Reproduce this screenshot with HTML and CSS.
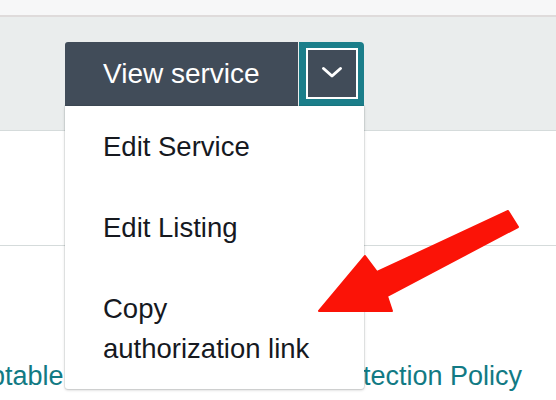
FILE: index.html
```html
<!DOCTYPE html>
<html lang="en">
<head>
<meta charset="utf-8">
<title>View service</title>
<link rel="stylesheet" href="styles.css">
</head>
<body>
<div class="page">
  <div class="topbar"></div>
  <div class="band">
    <div class="split">
      <button class="split-main" type="button">View service</button>
      <button class="split-toggle" type="button" aria-label="More actions">
        <span class="toggle-inner">
          <svg class="chevron" width="22" height="13" viewBox="0 0 22 13"><polyline points="2.5,2.5 11,10 19.5,2.5" fill="none" stroke="#ffffff" stroke-width="3" stroke-linecap="round" stroke-linejoin="round"/></svg>
        </span>
      </button>
      <ul class="menu">
        <li class="menu-item">Edit Service</li>
        <li class="menu-item">Edit Listing</li>
        <li class="menu-item">Copy authorization link</li>
      </ul>
    </div>
  </div>
  <div class="section"></div>
  <div class="footer">
    <a class="link link-left" href="#">Acceptable Use</a>
    <a class="link" href="#">Data Protection Policy</a>
  </div>
  <svg class="arrow" width="556" height="400" viewBox="0 0 556 400" aria-hidden="true">
    <polygon points="508,211 518,227 387,296 392,311 319,311 365,256 377,272" fill="#fb1307" stroke="#fb1307" stroke-width="2" stroke-linejoin="round"/>
  </svg>
</div>
</body>
</html>
```

FILE: styles.css
```css
* { box-sizing: border-box; }

html, body {
  margin: 0;
  padding: 0;
  background: #ffffff;
}

body {
  font-family: "Liberation Sans", Arial, Helvetica, sans-serif;
  color: #16191f;
}

.page {
  position: relative;
  width: 556px;
  height: 400px;
  overflow: hidden;
}

.topbar {
  height: 17px;
  background: #f7f7f8;
  border-bottom: 2px solid #dfdbdb;
}

.band {
  height: 114px;
  background: #eaeded;
  border-bottom: 1px solid #d5dbdb;
  padding: 25px 0 0 65px;
}

.split {
  position: relative;
  display: flex;
  width: 299px;
  height: 64px;
  z-index: 2;
}

.split-main {
  width: 233px;
  height: 64px;
  margin: 0;
  padding: 0 38px;
  border: 0;
  border-radius: 3px 0 0 0;
  background: #414c59;
  color: #ffffff;
  font-family: "Liberation Sans", Arial, Helvetica, sans-serif;
  font-size: 28px;
  line-height: 64px;
  text-align: left;
  white-space: nowrap;
}

.split-toggle {
  display: flex;
  width: 65px;
  height: 64px;
  margin: 0 0 0 1px;
  padding: 6px 6px 7px 7px;
  border: 0;
  border-radius: 0 4px 0 0;
  background: #1b7e8a;
}

.toggle-inner {
  flex: 1;
  display: flex;
  align-items: center;
  justify-content: center;
  border: 2px solid #ffffff;
  background: #414c59;
  padding-bottom: 2px;
}

.chevron { display: block; }

.menu {
  position: absolute;
  top: 100%;
  left: 0;
  width: 299px;
  margin: 0;
  padding: 0;
  list-style: none;
  background: #ffffff;
  border-radius: 0 0 3px 3px;
  box-shadow: 0 1px 3px rgba(0, 0, 0, 0.22), 0 0 0 1px rgba(0, 28, 36, 0.06);
}

.menu-item {
  padding: 20.5px 38px;
  font-size: 27.5px;
  line-height: 40px;
  color: #16191f;
}

.section {
  height: 115px;
  border-bottom: 1px solid #d5dbdb;
}

.footer {
  display: flex;
  justify-content: space-between;
  padding: 110px 34px 0 0;
  white-space: nowrap;
}

.link {
  color: #127a84;
  font-size: 27px;
  line-height: 40px;
  text-decoration: none;
}

.link-left {
  margin-left: -70px;
}

.arrow {
  position: absolute;
  left: 0;
  top: 0;
  z-index: 3;
  pointer-events: none;
}
```
